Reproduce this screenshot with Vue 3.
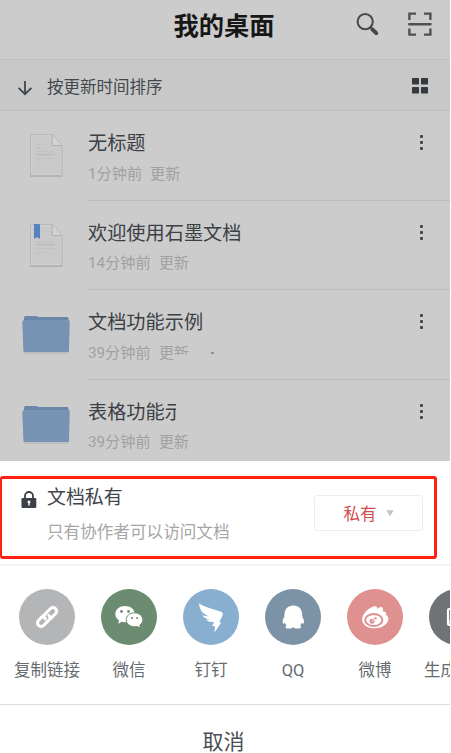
<script setup>
const files = [
  { name: '无标题', time: '1分钟前', note: '更新', kind: 'doc' },
  { name: '欢迎使用石墨文档', time: '14分钟前', note: '更新', kind: 'doc', marked: true },
  { name: '文档功能示例', time: '39分钟前', note: '更新', kind: 'folder', faded: true },
  { name: '表格功能示', time: '39分钟前', note: '更新', kind: 'folder', cut: true },
]
const targets = [
  { id: 'link', label: '复制链接' },
  { id: 'wechat', label: '微信' },
  { id: 'ding', label: '钉钉' },
  { id: 'qq', label: 'QQ' },
  { id: 'weibo', label: '微博' },
  { id: 'image', label: '生成图片' },
]
</script>

<template>
  <div class="screen">
    <div class="desktop">
      <header class="top">
        <h1>我的桌面</h1>
        <div class="tools">
          <svg width="26" height="26" viewBox="0 0 26 26" fill="none" stroke="#484848">
            <circle cx="10.2" cy="9.7" r="7.6" stroke-width="2" />
            <path d="M15.6 15.2l2 2" stroke-width="2" />
            <path d="M17.4 17.4l3.8 3.8" stroke-width="4" stroke-linecap="round" />
          </svg>
          <svg width="24" height="24" viewBox="0 0 24 24" fill="none" stroke="#505050" stroke-width="2.4">
            <path d="M1.4 8V1.600H8M16 1.600h6.400V8M1.400 16.500v6.100H8M16 22.600h6.400v-6.100M.3 12.200h23.200" />
          </svg>
        </div>
      </header>
      <div class="sort">
        <svg class="arrow" width="16" height="16" viewBox="0 0 16 16" fill="none" stroke="#41464b" stroke-width="1.8">
          <path d="M8 1v13M1.6 7.8L8 14.2l6.4-6.4" />
        </svg>
        <span>按更新时间排序</span>
        <svg class="grid" width="16" height="16" viewBox="0 0 16 16" fill="#343a40">
          <rect width="7" height="6.5" rx=".8" /><rect x="9" width="7" height="6.5" rx=".8" />
          <rect y="9" width="7" height="6.5" rx=".8" /><rect x="9" y="9" width="7" height="6.5" rx=".8" />
        </svg>
      </div>
      <ul class="files">
        <li v-for="f in files" :key="f.name">
          <div class="thumb">
            <svg v-if="f.kind === 'doc'" class="doc" width="37" height="47" viewBox="0 0 37 47">
              <path d="M2 3h23l9 11v31H2z" fill="#b5b5b5" opacity=".5" />
              <path d="M2.500 2.500h22.300l9.500 10.800v30.200H2.500z" fill="#c9c9c9" stroke="#b9b9b9" />
              <path d="M3.800 3.800h19M3.800 3.800v38.500h29" fill="none" stroke="#d2d2d2" />
              <path d="M2.200 44.200h32.400" stroke="#adadad" />
              <path d="M24.200 3v10.500h9.600z" fill="#d3d3d3" />
              <path d="M24.200 3v10.500h10" fill="none" stroke="#b0b0b0" />
              <path d="M8 12.500h7M8 15.500h5M8 19.500h18M8 26.500h20M8 30.500h7" stroke="#bfbfbf" stroke-width=".7" />
              <path d="M8.500 22.500h18" stroke="#bbb" stroke-width="1.500" />
              <path v-if="f.marked" d="M6 2h6v15l-3-2-3 2z" fill="#5384c1" />
            </svg>
            <svg v-else class="folder" width="50" height="42" viewBox="0 0 50 42">
              <path d="M2.300 10h46l-.8 29H3z" fill="#aaa" opacity=".4" />
              <path d="M3 3q0-2 1.500-2H15q1.500 0 2 1h29.500q1 0 1 1.500V9H3z" fill="#6a86a9" />
              <path d="M2.300 5.500h45.400q1 0 1 1.200L48 36q0 1-1 1H3.400q-1 0-1-1L1.300 6.700q0-1.200 1-1.200z" fill="#7892b3" />
              <path d="M2 6h46.500" stroke="#8099b9" />
            </svg>
          </div>
          <div class="info">
            <div class="name"><span :class="{ cut: f.cut }">{{ f.name }}</span></div>
            <div class="meta">
              <span>{{ f.time }}</span>
              <span v-if="f.faded" class="note">更<i>新</i><b></b></span>
              <span v-else class="note">{{ f.note }}</span>
            </div>
          </div>
          <div class="more"><i></i><i></i><i></i></div>
        </li>
      </ul>
    </div>

    <section class="sheet">
      <div class="access">
        <svg class="lock" width="16" height="18" viewBox="0 0 16 18">
          <path d="M4 8V5a4 4 0 0 1 8 0v3" fill="none" stroke="#3b4147" stroke-width="1.8" />
          <rect x=".5" y="7" width="14.800" height="10" rx="1.200" fill="#3b4147" />
          <path d="M8 9.500a1.500 1.500 0 0 1 .7 2.800V14.500H7.300v-2.200A1.500 1.500 0 0 1 8 9.500z" fill="#fff" />
        </svg>
        <div class="words">
          <div class="state">文档私有</div>
          <div class="hint">只有协作者可以访问文档</div>
        </div>
        <button class="pick"><span>私有</span><svg width="8" height="6" viewBox="0 0 8 6"><path d="M.3.300h7.400L4.500 5.700h-1z" fill="#c4c4c4" /></svg></button>
      </div>
      <div class="targets">
        <div v-for="t in targets" :key="t.id" class="target">
          <div class="disc" :class="t.id">
            <svg width="56" height="56" viewBox="0 0 56 56">
              <g v-if="t.id === 'link'" fill="none" stroke="#fff" stroke-width="3" stroke-linecap="round">
                <path d="M26.300 29.800c-1.800-1.800-1.500-3.600 0-5.100l5-5c1.500-1.500 3.600-1.500 5.200-.1 1.500 1.500 1.500 3.700 0 5.200l-4.600 4.600" />
                <path d="M29.700 26.300c1.800 1.800 1.500 3.600 0 5.100L24.800 36.300c-1.500 1.500-3.600 1.500-5.200.1-1.500-1.500-1.500-3.700 0-5.200l4.600-4.600" />
              </g>
              <template v-else-if="t.id === 'wechat'">
                <path d="M24 17c5.500 0 9.800 3.500 9.800 8s-4.300 8.200-9.800 8.200c-1.200 0-2.300-.2-3.300-.5l-3.400 2 .6-3.500c-2.200-1.500-3.600-3.700-3.600-6.200 0-4.500 4.300-8 9.700-8z" fill="#fff" />
                <path d="M33.500 23.800c4.600 0 8.300 3.100 8.300 7 0 2.100-1.200 4-3 5.300l.6 3-3.300-1.600c-.8.2-1.700.3-2.600.3-4.600 0-8.300-3.100-8.300-7s3.700-7 8.300-7z" fill="#fff" stroke="#6b8c70" stroke-width="1" />
                <g fill="#6b8c70"><circle cx="20.500" cy="22.500" r="1.400" /><circle cx="27.500" cy="22.500" r="1.400" /><circle cx="31" cy="29" r="1.100" /><circle cx="36.200" cy="29" r="1.100" /></g>
              </template>
              <path v-else-if="t.id === 'ding'" fill="#fff" d="M16 14.200c6 4.300 14 5.500 22 8.500 1.800.7 2.100 1.700 1.600 3.300-.8 2.500-2.200 4.700-3.200 7.200h2L31.500 43.500l.5-6.600h-3l2.200-4c-4 .6-6.700-.3-8.300-2.300 1.700.3 3.500.3 5.200.2-4.200-.3-7.500-1.800-9-4.700 2.500 1 5 1.300 7.500 1.300-5.500-1.600-10.200-5.500-10.600-13.200z" />
              <path v-else-if="t.id === 'qq'" fill="#fff" d="M28.500 16.500c5.600 0 8.600 3.800 8.600 9l.3 2.500c1.300 1.800 2 4 1.300 6.300-.3.900-1.200.6-2-.6-.3 1.200-.9 2-1.600 2.700 1.300.6 1.300 2.800-.9 3.100-2.400.3-4.300.1-5.100-1.100h-1.600c-.8 1.200-2.700 1.400-5.100 1.100-2.200-.3-2.200-2.500-.9-3.100-.7-.7-1.300-1.500-1.600-2.700-.8 1.200-1.700 1.500-2 .6-.7-2.300 0-4.500 1.300-6.300l.3-2.500c0-5.200 3.400-9 9-9z" />
              <template v-else-if="t.id === 'weibo'">
                <path fill="#fff" d="M15.300 32c-1.200-5.700 5-12.200 10.500-14.200 3.200-1.200 5-.1 4.500 2.200 1.300-1.200 2.500-2.200 4-2 1.900.3 2.200 2 1.400 4.500 2.700-.4 4.100 1 3.300 3.600 2.100 1 2.900 3.300 2 5.700-1.700 4.800-7.500 7.500-13.500 7.500-6.300 0-11.300-2.800-12.200-7.300z" />
                <ellipse cx="26.800" cy="31" rx="8.600" ry="6" fill="none" stroke="#df9190" stroke-width="2" />
                <circle cx="25" cy="32.300" r="2.500" fill="#df9190" /><circle cx="28.500" cy="29.200" r="1.200" fill="#df9190" />
                <circle cx="25.500" cy="31.700" r=".7" fill="#fff" />
              </template>
              <g v-else>
                <rect x="19" y="20" width="19" height="16" rx="1" fill="none" stroke="#fff" stroke-width="2.200" />
                <path d="M20.500 35v-4l3-2.500 4 3.500 5-5 4 4v4z" fill="#fff" />
              </g>
            </svg>
          </div>
          <span>{{ t.label }}</span>
        </div>
      </div>
      <div class="cancel">取消</div>
      <div class="frame"></div>
    </section>
  </div>
</template>

<style>
body { background: #fff; overflow: hidden; }
</style>

<style scoped>
* { box-sizing: border-box; }
.screen { width: 450px; height: 753px; overflow: hidden; font-family: Roboto, "Noto Sans CJK SC", sans-serif; background: #fff; }
.desktop { height: 461px; overflow: hidden; background: #ccc; }
.top { height: 60px; border-bottom: 1px solid #c0c0c0; display: grid; grid-template-columns: 1fr auto 1fr; align-items: start; }
h1 { grid-column: 2; margin: 8px 2px 0 0; font-size: 25.300px; line-height: 37px; font-weight: 700; color: #171717; white-space: nowrap; }
.tools { display: flex; justify-content: flex-end; gap: 27px; padding: 12px 18px 0 0; }
.sort { height: 51px; border-bottom: 1px solid #bfbfbf; background: #c8c8c8; display: flex; align-items: center; padding: 1px 22px 0 17px; font-size: 16.500px; color: #43484d; }
.sort span { margin-left: -1px; }
.arrow { margin-right: 15px; position: relative; top: 2px; }
.grid { margin-left: auto; }
.files { margin: 0; padding: 0; list-style: none; }
li { height: 89.500px; display: flex; }
.thumb { width: 88px; flex: none; }
.thumb svg { display: block; }
.doc { margin: 21px 0 0 28px; }
.folder { margin: 25px 0 0 21px; }
.info { flex: 1; border-bottom: 1px solid #bdbdbd; }
.name { margin-top: 19px; font-size: 19.200px; line-height: 28px; color: #3b4045; }
.name span { display: inline-block; }
.cut { clip-path: inset(0 8px 0 0); }
.meta { margin-top: 3.500px; display: flex; gap: 8px; font-size: 15.200px; line-height: 24px; color: #a1a1a1; }
.note { display: flex; }
.note i { font-style: normal; clip-path: inset(0 0 10px 0); }
.note b { width: 3px; height: 2px; margin: 11px 0 0 22px; background: #929292; }
.more { width: 58px; border-bottom: 1px solid #bdbdbd; display: flex; flex-direction: column; align-items: center; gap: 3px; padding-top: 24px; }
.more i { width: 3px; height: 3px; border-radius: 1px; background: #444; }
.sheet { position: relative; height: 292px; }
.access { height: 105px; border-bottom: 2px solid #f2f2f2; display: flex; padding-left: 21px; color: #41464b; }
.lock { margin: 30px 10px 0 0; }
.words { flex: 1; padding-top: 23px; }
.state { font-size: 18.900px; line-height: 28px; }
.hint { margin-top: 8px; font-size: 16.600px; line-height: 25px; color: #a6a6a6; white-space: nowrap; }
.pick { width: 109px; height: 36px; margin: 34px 27px 0 0; padding: 0; border: 1.500px solid #eee; border-radius: 2px; background: #fff; display: flex; align-items: center; justify-content: center; gap: 9px; font: 16.500px Roboto, "Noto Sans CJK SC", sans-serif; color: #d04c4c; }
.targets { height: 139px; border-bottom: 1px solid #dedede; padding: 23px 0 0 6px; display: flex; overflow: hidden; }
.target { width: 82px; flex: none; display: flex; flex-direction: column; align-items: center; font-size: 16.500px; line-height: 24px; color: #666b70; gap: 14px; white-space: nowrap; }
.disc { width: 56px; height: 56px; border-radius: 50%; }
.disc svg { display: block; }
.link { background: #b4b5b7; }
.wechat { background: #6b8c70; }
.ding { background: #89afd0; }
.qq { background: #7c93a7; }
.weibo { background: #df9190; }
.image { background: #707376; }
.cancel { height: 48px; padding: 22px 3px 0 0; text-align: center; font-size: 21px; line-height: 31px; color: #4a4e53; overflow: hidden; }
.frame { position: absolute; left: 0; top: 15px; width: 437px; height: 83px; border: 3px solid #ff2013; border-left-width: 2px; border-radius: 3px; pointer-events: none; }
</style>
